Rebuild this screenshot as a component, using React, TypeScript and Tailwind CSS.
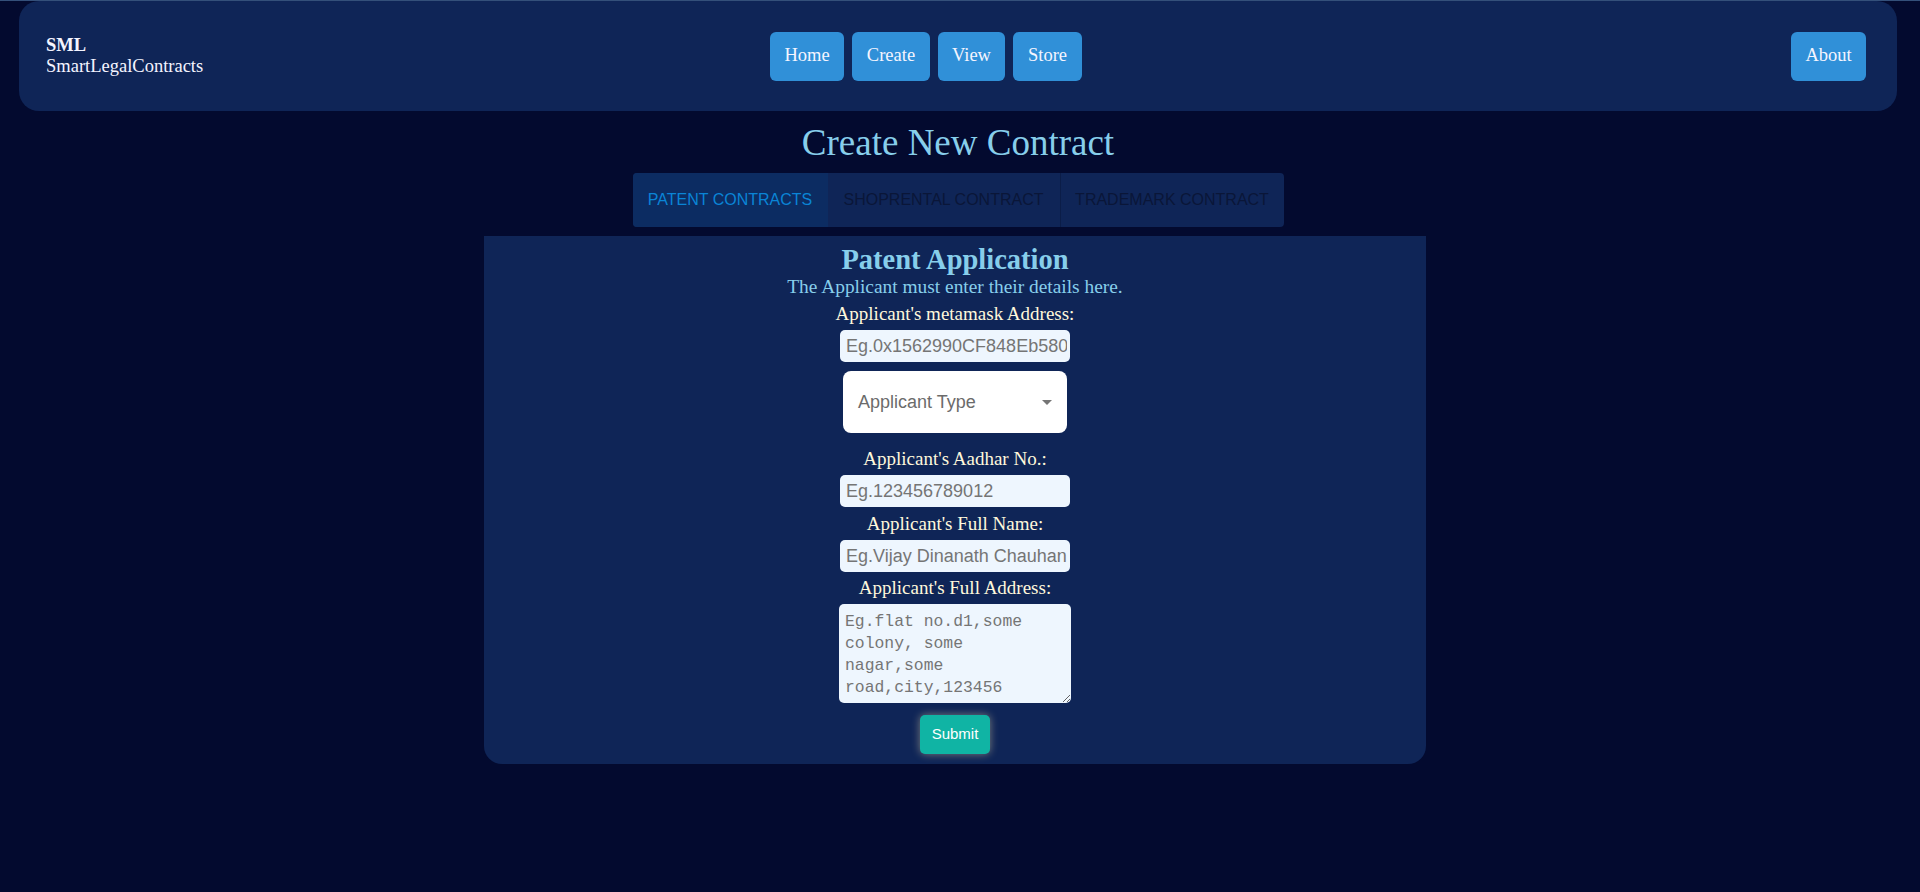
import React from "react";

const navLinks = [
  { label: "Home", w: "w-[74px]" },
  { label: "Create", w: "w-[78px]" },
  { label: "View", w: "w-[67px]" },
  { label: "Store", w: "w-[69px]" },
];

const Navbar = () => {
  return (
    <div className="mx-[19px] flex h-[110px] items-center rounded-[20px] bg-[#0f2557] pl-[27px] pr-[31px] font-['Liberation_Serif',serif]">
      <div className="w-[724px] text-[18.5px] leading-[21px] text-[#f4f4ff]">
        <div className="font-bold">SML</div>
        <div>SmartLegalContracts</div>
      </div>
      <div className="flex gap-[8px]">
        {navLinks.map((l) => (
          <button
            key={l.label}
            className={`${l.w} h-[49px] rounded-[6px] bg-[#3090d8] text-[18.5px] text-[#f5f5ff]`}
          >
            {l.label}
          </button>
        ))}
      </div>
      <button className="ml-auto h-[49px] w-[75px] rounded-[6px] bg-[#3090d8] text-[18.5px] text-[#f5f5ff]">
        About
      </button>
    </div>
  );
};

const Tabs = () => {
  return (
    <div className="mx-auto mt-[10px] flex h-[54px] w-fit overflow-hidden rounded-[4px] bg-[#0f2557] font-['Liberation_Sans',Arial,sans-serif] text-[16px] uppercase">
      <div className="flex w-[195px] items-center justify-center bg-[#0c2c62] text-[#0a84d6]">
        Patent Contracts
      </div>
      <div className="flex w-[232px] items-center justify-center text-[#0a1638]">
        ShopRental Contract
      </div>
      <div className="flex w-[224px] items-center justify-center border-l border-[#0b1d48] text-[#0a1638]">
        Trademark Contract
      </div>
    </div>
  );
};

const inputCls =
  "h-[32px] w-[230px] rounded-[5px] bg-[#eef6fe] pl-[6px] pr-[3px] font-['Liberation_Sans',Arial,sans-serif] text-[18px] text-black outline-none placeholder:text-[#757575]";

const Label = ({ text, mt }: { text: string; mt: string }) => (
  <label className={`${mt} block text-[19px] leading-[20px] text-[#fff8dc]`}>{text}</label>
);

const PatentForm = () => {
  return (
    <div className="flex justify-center pr-[6px]">
      <div className="mt-[9px] flex w-[942px] flex-col items-center rounded-b-[18px] bg-[#0f2557] pb-[10px] pt-[9px] font-['Liberation_Serif',serif]">
        <h2 className="text-[28.5px] font-bold leading-[30px] text-[#87ceeb]">Patent Application</h2>
        <p className="mt-[2px] text-[19.4px] leading-[20px] text-[#87ceeb]">
          The Applicant must enter their details here.
        </p>

        <Label text="Applicant's metamask Address:" mt="mt-[7px]" />
        <input className={`mt-[6px] ${inputCls}`} placeholder="Eg.0x1562990CF848Eb5800000000000" />

        <div className="mt-[9px] flex h-[62px] w-[224px] items-center justify-between rounded-[8px] bg-white px-[15px]">
          <span className="font-['Liberation_Sans',Arial,sans-serif] text-[18px] text-[#6b6b6b]">
            Applicant Type
          </span>
          <svg width="10" height="5" viewBox="0 0 10 5">
            <path d="M0 0 L10 0 L5 5 Z" fill="#757575" />
          </svg>
        </div>

        <Label text="Applicant's Aadhar No.:" mt="mt-[16px]" />
        <input className={`mt-[6px] ${inputCls}`} placeholder="Eg.123456789012" />

        <Label text="Applicant's Full Name:" mt="mt-[7px]" />
        <input className={`mt-[6px] ${inputCls}`} placeholder="Eg.Vijay Dinanath Chauhan" />

        <Label text="Applicant's Full Address:" mt="mt-[6px]" />
        <textarea
          className="mt-[6px] h-[99px] w-[232px] rounded-[5px] border-0 bg-[#eef6fe] px-[6px] pt-[7px] font-['Liberation_Mono',monospace] text-[16.4px] leading-[22px] text-black outline-none placeholder:text-[#757575]"
          placeholder="Eg.flat no.d1,some colony, some nagar,some road,city,123456"
        />

        <button className="mt-[12px] h-[39px] w-[70px] rounded-[5px] bg-[#10b4a4] font-['Liberation_Sans',Arial,sans-serif] text-[15px] text-white shadow-[0_0_9px_rgba(255,236,170,0.45)]">
          Submit
        </button>
      </div>
    </div>
  );
};

export default function App() {
  return (
    <div className="min-h-screen bg-[#030a2f]">
      <div className="h-px bg-[#34507a]" />
      <div className="pr-[4px]">
        <Navbar />
        <h1 className="mt-[12px] text-center font-['Liberation_Serif',serif] text-[37px] leading-[40px] text-[#87ceeb]">
          Create New Contract
        </h1>
        <Tabs />
        <PatentForm />
      </div>
    </div>
  );
}
